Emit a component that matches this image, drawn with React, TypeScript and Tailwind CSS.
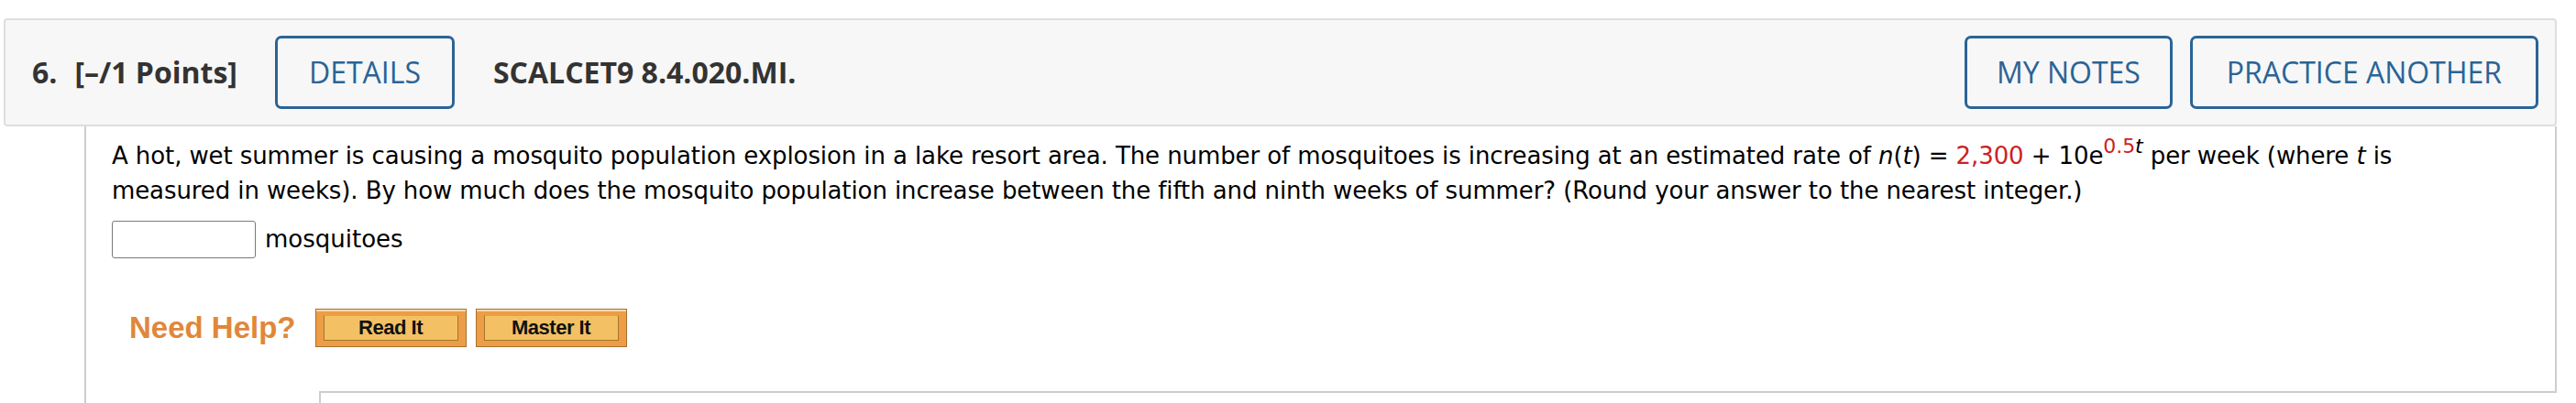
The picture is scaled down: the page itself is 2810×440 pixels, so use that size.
import React from "react";

const HelpButton = ({ label }: { label: string }) => (
  <button
    type="button"
    className="w-[165px] h-[42px] border border-[#a86f2d] bg-[#ec9d45] px-[8px] py-[6px] shadow-[inset_0_2px_0_#f8d9a8]"
  >
    <span
      className="flex h-full w-full items-center justify-center border border-[#a8742f] border-t-[#d9a25a] bg-[#f3c163] text-[22px] font-bold tracking-[-0.5px] text-[#111]"
      style={{ fontFamily: '"Liberation Sans", Arial, sans-serif' }}
    >
      {label}
    </span>
  </button>
);

const App = () => {
  const headerFont = { fontFamily: '"Open Sans", "Noto Sans", sans-serif' };
  const bodyFont = { fontFamily: '"DejaVu Sans", Verdana, sans-serif' };

  return (
    <div className="w-[2810px] h-[440px] overflow-hidden bg-white pt-[20px] pl-[4px] pr-[21px]">
      <div
        className="flex h-[118px] items-center rounded-[4px] border-2 border-[#dedede] bg-[#f7f7f7] pl-[29px] pr-[18px]"
        style={headerFont}
      >
        <span className="text-[32px] font-bold text-[#333]">6.</span>
        <span className="ml-[19px] text-[32px] font-bold text-[#333]">[–/1 Points]</span>
        <button
          type="button"
          className="ml-[41px] h-[80px] rounded-[7px] border-[3px] border-[#2a6496] px-[34px] text-[32px] text-[#2a6496]"
        >
          DETAILS
        </button>
        <span className="ml-[42px] text-[32px] font-bold text-[#333]">SCALCET9 8.4.020.MI.</span>
        <button
          type="button"
          className="ml-auto h-[80px] rounded-[7px] border-[3px] border-[#2a6496] px-[32px] text-[32px] text-[#2a6496]"
        >
          MY NOTES
        </button>
        <button
          type="button"
          className="ml-[19px] h-[80px] rounded-[7px] border-[3px] border-[#2a6496] px-[37px] text-[32px] text-[#2a6496]"
        >
          PRACTICE ANOTHER
        </button>
      </div>

      <div className="ml-[88px] h-[302px] border-l-2 border-[#cdcdcd]">
        <div className="h-[289px] border-r-2 border-[#cdcdcd] pl-[28px] pt-[13px]" style={bodyFont}>
          <p className="whitespace-nowrap text-[26px] leading-[38px] tracking-[-0.1px] text-black">
            A hot, wet summer is causing a mosquito population explosion in a lake resort area. The
            number of mosquitoes is increasing at an estimated rate of <i>n</i>(<i>t</i>) ={" "}
            <span className="text-[#cc2222]">2,300</span> + 10e
            <sup className="relative -top-[12px] text-[22px]">
              <span className="text-[#cc2222]">0.5</span>
              <i>t</i>
            </sup>{" "}
            per week (where <i>t</i> is
            <br />
            measured in weeks). By how much does the mosquito population increase between the fifth
            and ninth weeks of summer? (Round your answer to the nearest integer.)
          </p>

          <div className="mt-[14px] flex items-center">
            <input
              type="text"
              className="h-[41px] w-[157px] rounded-[3px] border border-[#7a7a7a] bg-white outline-none"
            />
            <span className="ml-[10px] text-[26px] text-black">mosquitoes</span>
          </div>

          <div className="mt-[51px] flex items-center">
            <span
              className="ml-[19px] text-[33px] font-bold text-[#e0873a]"
              style={{ fontFamily: '"Liberation Sans", Arial, sans-serif' }}
            >
              Need Help?
            </span>
            <div className="ml-[21px] flex gap-[10px]">
              <HelpButton label="Read It" />
              <HelpButton label="Master It" />
            </div>
          </div>
        </div>
        <div className="ml-[254px] h-[20px] border-l-2 border-t-2 border-[#cdcdcd]" />
      </div>
    </div>
  );
};

export default App;
